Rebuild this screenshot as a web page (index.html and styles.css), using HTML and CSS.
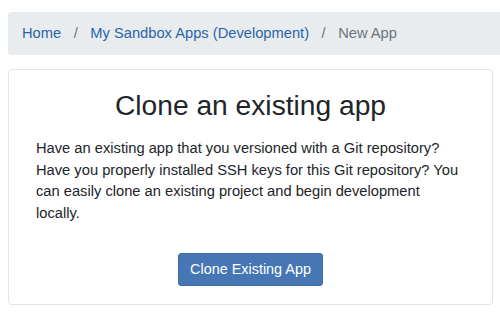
FILE: index.html
```html
<!doctype html>
<html>
    <head>
        <meta charset="UTF-8" />
        <title>New App</title>
        <link rel="stylesheet" href="styles.css">
    </head>
    <body>
        <div class="page">
            <!-- Breadcrumb -->
            <nav class="breadcrumb">
                <a class="crumb" href="#">Home</a>
                <span class="divider">/</span>
                <a class="crumb" href="#">My Sandbox Apps (Development)</a>
                <span class="divider">/</span>
                <span class="crumb current">New App</span>
            </nav>

            <!-- Clone card -->
            <div class="card">
                <h2 class="card-title">Clone an existing app</h2>
                <p class="card-text">
                    Have an existing app that you versioned with a Git repository?
                    Have you properly installed SSH keys for this Git repository?
                    You can easily clone an existing project and begin development
                    locally.
                </p>
                <div class="actions">
                    <button class="button">Clone Existing App</button>
                </div>
            </div>
        </div>
    </body>
</html>
```

FILE: styles.css
```css
html {
    overflow: hidden;
}

body {
    font-family: "Liberation Sans", "Helvetica Neue", Arial, sans-serif;
    margin: 0;
    padding: 0;
    background-color: #ffffff;
    color: #212529;
    font-size: 14.7px;
    line-height: 21.6px;
}

.page {
    width: 485px;
    padding: 12px 0 0 8px;
}

/* the bar runs on past the right edge of the window */
.breadcrumb {
    display: flex;
    align-items: center;
    white-space: nowrap;
    background-color: #e9ecef;
    border-radius: 4px 0 0 4px;
    padding: 10.5px 14px;
    margin: 0 -7px 14.5px 0;
}

.crumb {
    color: #2a64aa;
    text-decoration: none;
}

.crumb.current {
    color: #6c757d;
}

.divider {
    color: #6c757d;
    padding: 0 12.5px;
}

.card {
    border: 1px solid #e1e3e6;
    border-radius: 4px;
    padding: 19px 18px 18px;
}

.card-title {
    font-size: 28.2px;
    font-weight: 400;
    line-height: 1.2;
    text-align: center;
    margin: 0 0 15px;
}

.card-text {
    margin: 0 0 29px;
    padding: 0 12px 0 9px;
}

.actions {
    display: flex;
    justify-content: center;
}

.button {
    font-family: inherit;
    font-size: 14.4px;
    line-height: 21px;
    padding: 5px 11px;
    color: #ffffff;
    background-color: #4677b4;
    border: 1px solid #3f6ca6;
    border-radius: 3px;
    cursor: pointer;
}
```
